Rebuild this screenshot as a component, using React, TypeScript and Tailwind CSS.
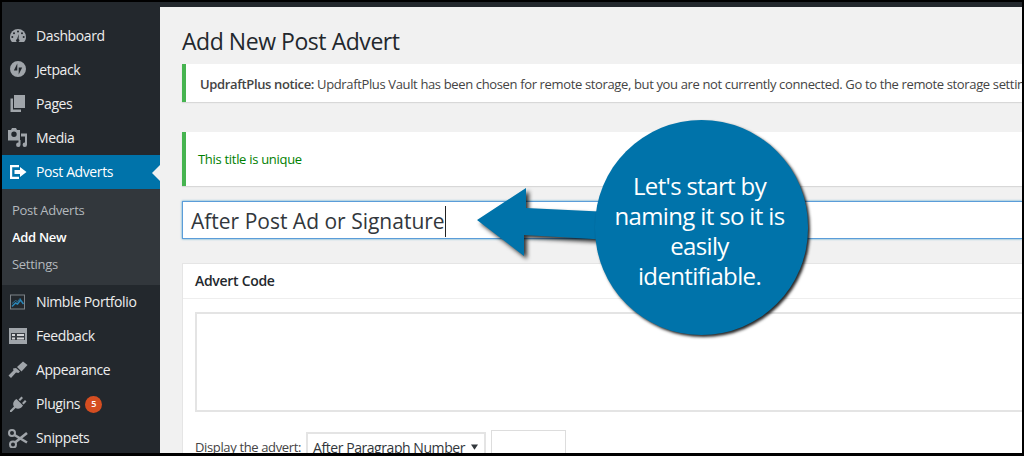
import { FC, ReactNode } from "react";

const iconClass = "w-5 h-5 fill-[#a0a5aa]";

const icons: Record<string, ReactNode> = {
  dashboard: (
    <svg viewBox="0 0 20 20" className={iconClass}>
      <path d="M10 3a8 8 0 0 0-8 8c0 2 .7 3.800 2 5h12c1.300-1.200 2-3 2-5a8 8 0 0 0-8-8z" />
      <circle cx="10" cy="5.500" r="1" fill="#23282d" />
      <circle cx="6" cy="7.200" r="1" fill="#23282d" />
      <circle cx="14" cy="7.200" r="1" fill="#23282d" />
      <circle cx="4.300" cy="11" r="1" fill="#23282d" />
      <circle cx="15.700" cy="11" r="1" fill="#23282d" />
      <path d="M10.800 8l-.2 5a1.700 1.700 0 1 1-1.500-.1z" fill="#23282d" />
    </svg>
  ),
  jetpack: (
    <svg viewBox="0 0 20 20" className={iconClass}>
      <path d="M10 1a8 8 0 1 0 0 16 8 8 0 0 0 0-16zM9.300 10.500H5.800l3.500-7zm1.400 4v-7h3.500z" fillRule="evenodd" />
    </svg>
  ),
  pages: (
    <svg viewBox="0 0 20 20" className={iconClass}>
      <path d="M6 1h11v13H6z" />
      <path d="M2.500 4.500V18H13v-2.500H5V4.500z" />
    </svg>
  ),
  media: (
    <svg viewBox="0 0 20 20" className={iconClass}>
      <path d="M0 2h3l1-2h4l1 2h3v10.500H0zm6 1.500a2.700 2.700 0 1 0 0 5.400 2.700 2.700 0 0 0 0-5.400z" fillRule="evenodd" />
      <path d="M13 5.500h6v11.300a2.200 2.200 0 1 1-2-2.200V8.500h-4z" />
      <path d="M12.500 12v4.800a2.200 2.200 0 1 1-2-2.200V12z" />
    </svg>
  ),
  adverts: (
    <svg viewBox="0 0 20 20" className="w-5 h-5 fill-white">
      <path d="M2 3h9v2.200H4.200v9.600H11V17H2z" />
      <path d="M12 5l6.500 5-6.500 5v-3H6.500V8H12z" />
    </svg>
  ),
  nimble: (
    <svg viewBox="0 0 20 20" className="w-5 h-5">
      <rect x="2.500" y="3" width="14" height="14" fill="none" stroke="#7d8287" />
      <path d="M4 14.500l3.500-3.500 2 1 3-4 3 4" fill="none" stroke="#2a86b8" strokeWidth="1.500" />
      <path d="M4 11.500l3.500-3 2 1 3-3.500" fill="none" stroke="#2a6f96" />
    </svg>
  ),
  feedback: (
    <svg viewBox="0 0 20 20" className="w-5 h-5">
      <path d="M1 2h18v16H1z" fill="#a0a5aa" />
      <path d="M3 7h14v7H3z" fill="#3a3f45" />
      <path d="M4 8h3v2H4zM9 8h7v2H9zM4 11.500h3v2H4zM9 11.500h7v2H9z" fill="#d4d6d8" />
    </svg>
  ),
  appearance: (
    <svg viewBox="0 0 20 20" className={iconClass}>
      <path d="M9 7l6-5.500L19.500 5l-6 6.500z" />
      <path d="M8 8l4 3.500-1.500 1.500-2.500-.5-5 5.500L.5 15.500l5-5-.5-2z" />
    </svg>
  ),
  plugins: (
    <svg viewBox="0 0 20 20" className={iconClass}>
      <path d="M8.500 5L15 11.500C13 15 9.500 15.500 7.500 14L3.500 18H2v-1.500L6 12.500C4.500 10.500 5 7 8.500 5z" />
      <path d="M10.500 5.500l3-3L15 4l-3 3zM14 9l3-3 1.500 1.500-3 3z" />
    </svg>
  ),
  snippets: (
    <svg viewBox="0 0 20 20" className="w-5 h-5 fill-none stroke-[#a0a5aa]">
      <circle cx="4" cy="5" r="3" strokeWidth="2" />
      <circle cx="5" cy="16.500" r="3" strokeWidth="2" />
      <path d="M6.500 7L19 14.500M7 14.500L19 5" strokeWidth="2.600" />
    </svg>
  ),
};

const MenuItem: FC<{ icon: string; label: string; active?: boolean; badge?: string }> = ({ icon, label, active, badge }) => (
  <div className={`relative flex items-center h-[34px] text-sm tracking-[-0.4px] ${active ? "bg-[#0073aa] text-white" : "text-[#eeeeee]"}`}>
    <div className="w-[34px] flex justify-center pr-0.5">{icons[icon]}</div>
    <span>{label}</span>
    {badge && (
      <span className="ml-[5px] w-[17px] h-[17px] rounded-full bg-[#d54e21] text-white text-[9px] font-semibold flex items-center justify-center">{badge}</span>
    )}
    {active && (
      <span className="absolute right-0 top-[10px] border-y-[8px] border-r-[8px] border-y-transparent border-r-[#f1f1f1]" />
    )}
  </div>
);

const Callout: FC = () => (
  <>
    <svg viewBox="0 0 140 80" className="absolute left-[475px] top-[186px] w-[140px] h-[80px] drop-shadow-[3px_3px_2px_rgba(0,0,0,0.8)]">
      <path d="M2 34L51 2V22L135 26V54L49 49V70z" fill="#0073aa" />
    </svg>
    <div className="absolute left-[595px] top-[120px] w-[213px] h-[215px] rounded-full bg-[#0073aa] shadow-[2px_2px_3px_rgba(0,0,0,0.85)] flex items-center justify-center text-center text-white text-[24px] leading-[30px] tracking-[-0.65px]">
      <div className="w-[180px] pt-[7px] pr-[4px]">
        Let's start by naming it so it is easily identifiable.
      </div>
    </div>
  </>
);

export default function App() {
  return (
    <div className="relative w-[1024px] h-[456px] overflow-hidden bg-black pt-[2px] pl-[2px] pr-[2px] pb-[3px] font-['Open_Sans',sans-serif]">
      <div className="h-full flex flex-col overflow-hidden">
        <div className="h-[5px] bg-[#23282d] shrink-0" />
        <div className="flex flex-1 min-h-0">
          <aside className="w-[158px] shrink-0 bg-[#23282d] pt-3">
            <MenuItem icon="dashboard" label="Dashboard" />
            <MenuItem icon="jetpack" label="Jetpack" />
            <MenuItem icon="pages" label="Pages" />
            <MenuItem icon="media" label="Media" />
            <MenuItem icon="adverts" label="Post Adverts" active />
            <div className="h-[96px] bg-[#32373c] pt-[8px] pl-[10px] text-[13px] tracking-[-0.3px] text-[#b4b9be]">
              <div className="h-[27px] leading-[27px]">Post Adverts</div>
              <div className="h-[27px] leading-[27px] font-semibold text-white">Add New</div>
              <div className="h-[27px] leading-[27px]">Settings</div>
            </div>
            <MenuItem icon="nimble" label="Nimble Portfolio" />
            <MenuItem icon="feedback" label="Feedback" />
            <MenuItem icon="appearance" label="Appearance" />
            <MenuItem icon="plugins" label="Plugins" badge="5" />
            <MenuItem icon="snippets" label="Snippets" />
          </aside>
          <main className="flex-1 min-w-0 bg-[#f1f1f1] pl-[22px] overflow-hidden">
            <h1 className="mt-[18px] h-[32px] leading-[32px] text-[23px] tracking-[-0.45px] text-[#23282d] whitespace-nowrap">Add New Post Advert</h1>
            <div className="mt-[7px] h-[38px] flex items-center bg-white border-l-4 border-[#46b450] shadow-[0_1px_1px_rgba(0,0,0,0.1)] pl-[14px] pt-[3px] text-[13px] tracking-[-0.36px] text-[#444444] whitespace-nowrap">
              <span><b className="font-semibold">UpdraftPlus notice:</b> UpdraftPlus Vault has been chosen for remote storage, but you are not currently connected. Go to the remote storage settings</span>
            </div>
            <div className="mt-[30px] h-[54px] flex items-center bg-white border-l-4 border-[#46b450] shadow-[0_1px_1px_rgba(0,0,0,0.1)] pl-[12px] pt-[2px] text-[13px] tracking-[-0.3px] text-[#008000]">
              This title is unique
            </div>
            <div className="mt-[15px] h-[38px] flex items-center bg-white border border-[#5b9dd9] border-r-0 pl-2 pt-[3px] text-[21px] text-[#32373c] shadow-[0_0_2px_rgba(30,140,190,0.8)]">
              <span className="border-r border-[#222222] whitespace-nowrap">After Post Ad or Signature</span>
            </div>
            <section className="mt-[24px] bg-white border border-[#e5e5e5] border-r-0">
              <div className="h-[35px] flex items-center pl-3 border-b border-[#eeeeee] text-sm font-semibold tracking-[-0.3px] text-[#23282d]">Advert Code</div>
              <div className="pl-3 pt-[13px]">
                <div className="h-[100px] border-2 border-r-0 border-[#e4e4e4]" />
                <div className="mt-[18px] flex items-start text-[13px] tracking-[-0.36px] text-[#444444]">
                  <span className="mt-[8px] whitespace-nowrap">Display the advert:</span>
                  <div className="ml-[5px] mt-[2px] w-[180px] h-[32px] border-2 border-[#e4e4e4] flex items-center justify-between pl-[5px] pr-[6px] text-sm tracking-[-0.44px] text-[#32373c] whitespace-nowrap">
                    <span>After Paragraph Number</span>
                    <svg viewBox="0 0 8 6" className="w-[7px] h-[6px] mb-[3px] fill-[#32373c]">
                      <path d="M0 0h8L4 6z" />
                    </svg>
                  </div>
                  <div className="ml-[5px] w-[75px] h-[32px] border border-[#dddddd]" />
                </div>
              </div>
            </section>
          </main>
        </div>
      </div>
      <Callout />
    </div>
  );
}
